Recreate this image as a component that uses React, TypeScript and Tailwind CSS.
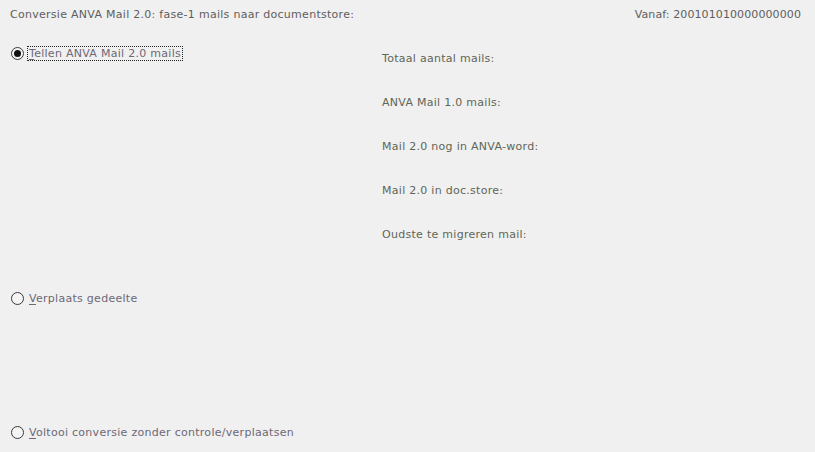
const Radio = ({ checked }: { checked?: boolean }) => (
  <span className="flex h-[13px] w-[13px] shrink-0 items-center justify-center rounded-full border border-[#3a3a3a] bg-[#f4f4f4]">
    {checked && <span className="h-[7px] w-[7px] rounded-full bg-[#111]" />}
  </span>
)

const Option = ({ label, checked, className }: { label: string; checked?: boolean; className?: string }) => (
  <div className={`flex items-center gap-[4px] pl-[11px] ${className ?? ''}`}>
    <Radio checked={checked} />
    <span
      className={`px-[1px] leading-[13px] text-[#6c6876] ${checked ? 'outline outline-1 outline-dotted outline-[#222]' : ''}`}
    >
      <span className="underline underline-offset-2">{label[0]}</span>
      {label.slice(1)}
    </span>
  </div>
)

const stats = [
  'Totaal aantal mails:',
  'ANVA Mail 1.0 mails:',
  'Mail 2.0 nog in ANVA-word:',
  'Mail 2.0 in doc.store:',
  'Oudste te migreren mail:',
]

export default function App() {
  return (
    <div className="h-[452px] w-[815px] overflow-hidden bg-[#f0f0f0] font-['DejaVu_Sans',sans-serif] text-[11px] tracking-[0.28px] text-[#5e5e5e]">
      <div className="flex justify-between pl-[10px] pr-[14px] pt-[8px] leading-[13px]">
        <span>Conversie ANVA Mail 2.0: fase-1 mails naar documentstore:</span>
        <span className="tracking-[0.1px]">Vanaf: 200101010000000000</span>
      </div>
      <div className="flex">
        <div className="flex w-[382px] flex-col">
          <Option label="Tellen ANVA Mail 2.0 mails" checked className="mt-[26px]" />
          <Option label="Verplaats gedeelte" className="mt-[232px]" />
          <Option label="Voltooi conversie zonder controle/verplaatsen" className="mt-[121px]" />
        </div>
        <div className="flex flex-col gap-[31px] pt-[31px] leading-[13px] text-[#5f6656]">
          {stats.map((s) => (
            <span key={s}>{s}</span>
          ))}
        </div>
      </div>
    </div>
  )
}
